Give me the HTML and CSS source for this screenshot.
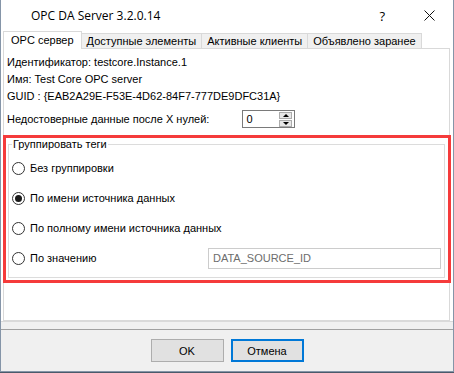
FILE: index.html
```html
<!DOCTYPE html>
<html lang="ru">
<head>
  <meta charset="UTF-8"/>
  <title>OPC DA Server 3.2.0.14</title>
  <link rel="stylesheet" href="styles.css">
</head>
<body>
  <div class="window">
    <div class="titlebar">
      <span class="title">OPC DA Server 3.2.0.14</span>
      <span class="help">?</span>
      <span class="close">
        <svg width="11" height="11" viewBox="0 0 11 11"><path d="M0.5 0.5L10.5 10.5M10.5 0.5L0.5 10.5" stroke="#111" stroke-width="1"/></svg>
      </span>
    </div>
    <div class="main">
      <div class="tabs">
        <div class="tab active">OPC сервер</div>
        <div class="tab">Доступные элементы</div>
        <div class="tab">Активные клиенты</div>
        <div class="tab">Объявлено заранее</div>
      </div>
      <div class="panel">
        <div class="info">
          <p>Идентификатор: testcore.Instance.1</p>
          <p>Имя: Test Core OPC server</p>
          <p>GUID : {EAB2A29E-F53E-4D62-84F7-777DE9DFC31A}</p>
        </div>
        <div class="row">
          <span>Недостоверные данные после X нулей:</span>
          <div class="spin">
            <span class="spin-val">0</span>
            <div class="spin-btns">
              <span class="spin-btn up"></span>
              <span class="spin-btn down"></span>
            </div>
          </div>
        </div>
        <fieldset class="group">
          <legend>Группировать теги</legend>
          <div class="radio"><span class="circle"></span>Без группировки</div>
          <div class="radio"><span class="circle checked"></span>По имени источника данных</div>
          <div class="radio"><span class="circle"></span>По полному имени источника данных</div>
          <div class="radio"><span class="circle"></span>По значению<div class="field">DATA_SOURCE_ID</div></div>
        </fieldset>
        <div class="mark"></div>
      </div>
    </div>
    <div class="strip"></div>
    <div class="footer">
      <button class="btn">OK</button>
      <button class="btn default">Отмена</button>
    </div>
  </div>
</body>
</html>
```

FILE: styles.css
```css
*{margin:0;padding:0;box-sizing:border-box;}
html,body{background:#4a5a6a;}
body{font-family:'Liberation Sans',Arial,sans-serif;font-size:11px;color:#000;}
.window{width:454px;height:372px;background:#f0f0f0;border:1px solid #8595a8;border-top:none;}
.titlebar{height:31px;background:#fff;display:flex;align-items:center;padding-left:30px;}
.title{font-family:'Open Sans','Noto Sans',sans-serif;font-size:12px;flex:1;}
.help{font-family:'Open Sans',sans-serif;font-size:13px;margin-right:39px;}
.close{display:flex;width:11px;height:11px;margin-right:18px;}
.main{background:#fff;padding:0 3px 0 2px;}
.tabs{display:flex;align-items:flex-end;height:17px;}
.tab{height:15px;line-height:14px;padding:0 5px;background:#f0f0f0;border:1px solid #d9d9d9;border-bottom:none;margin-left:-1px;white-space:nowrap;}
.tab.active{line-height:17px;background:#fff;padding:0 7px;margin-left:0;position:relative;z-index:1;margin-bottom:-1px;height:18px;}
.panel{position:relative;height:273px;border:1px solid #d9d9d9;background:#fff;padding:5px 0 0 3px;}
.info p{line-height:17px;white-space:nowrap;}
.row{display:flex;align-items:center;margin-top:5px;height:18px;}
.spin{margin-left:33px;width:53px;height:18px;border:1px solid #7a7a7a;display:flex;align-items:center;padding:0 2px 0 3px;}
.spin-val{flex:1;}
.spin-btns{display:flex;flex-direction:column;gap:1px;}
.spin-btn{position:relative;width:13px;height:7px;background:#e8e8e8;border:1px solid #acacac;}
.spin-btn::after{content:'';position:absolute;left:3px;border-left:3px solid transparent;border-right:3px solid transparent;}
.spin-btn.up::after{top:1px;border-bottom:3px solid #000;}
.spin-btn.down::after{top:1px;border-top:3px solid #000;}
.group{margin:10px 4px 0 1px;border:1px solid #dcdcdc;padding:2px 3px 4px 3px;min-width:0;}
.group legend{margin-left:0;padding:0 1px;line-height:13px;}
.radio{display:flex;align-items:center;height:30px;}
.circle{width:13px;height:13px;border:1px solid #333;border-radius:50%;background:#fff;margin-right:5px;display:flex;align-items:center;justify-content:center;}
.circle.checked::after{content:'';width:7px;height:7px;border-radius:50%;background:#1a1a1a;}
.field{margin-left:auto;width:233px;height:21px;border:1px solid #cccccc;color:#6d6d6d;padding-left:4px;line-height:19px;}
.mark{position:absolute;left:-1px;top:86px;width:448px;height:148px;border:3px solid #f53b3b;}
.strip{height:8px;background:#f0f0f0;border-top:1px solid #d9d9d9;}
.footer{border-top:1px solid #a0a0a0;display:flex;justify-content:center;gap:7px;padding-top:9px;height:42px;}
.btn{font-family:inherit;font-size:11px;width:73px;height:23px;background:#e1e1e1;border:1px solid #adadad;color:#000;}
.btn.default{border:2px solid #0078d7;}
```
